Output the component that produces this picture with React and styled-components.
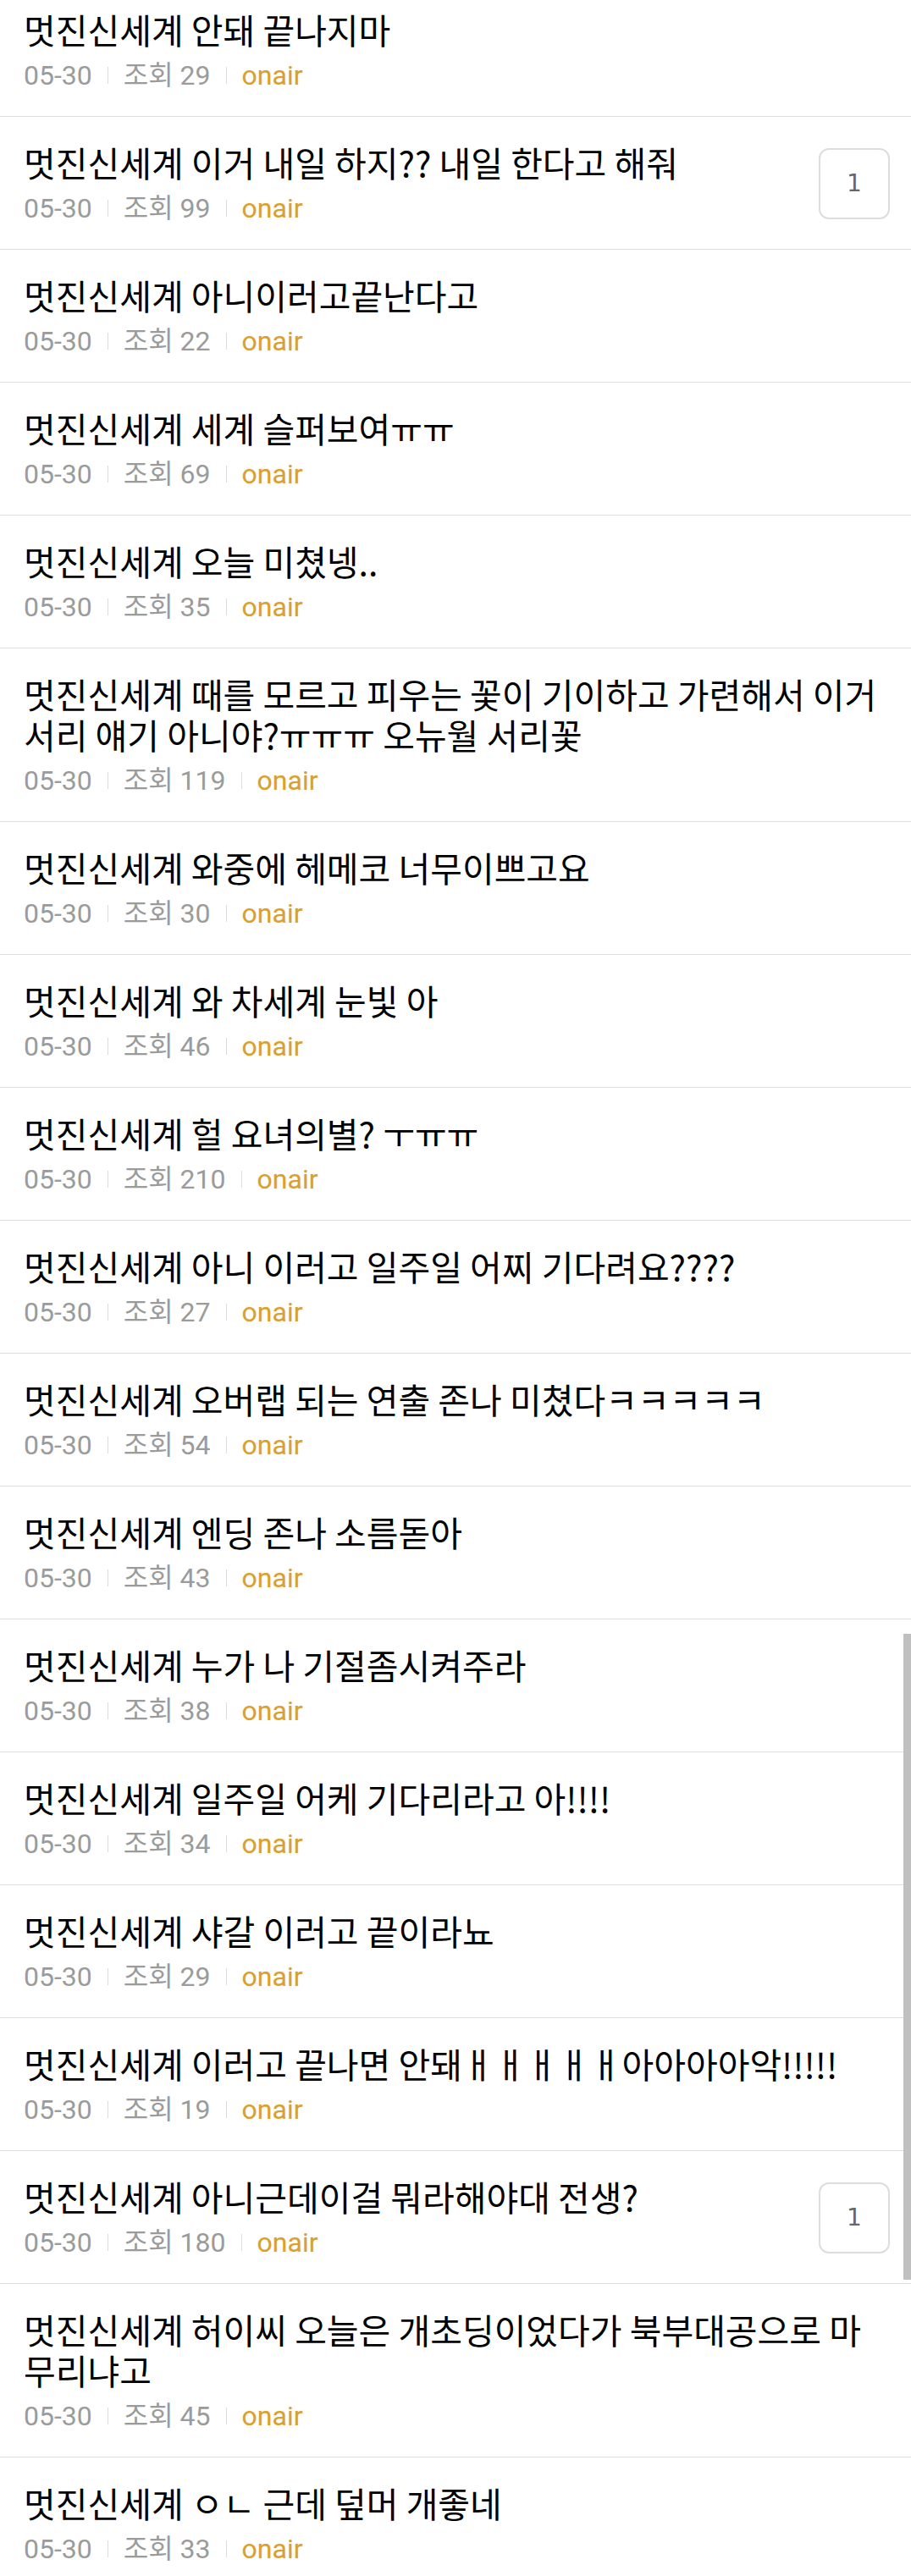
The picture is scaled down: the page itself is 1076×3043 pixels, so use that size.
import React from "react";
import styled, { createGlobalStyle } from "styled-components";

const GlobalStyle = createGlobalStyle`
  html, body {
    margin: 0;
    padding: 0;
    background: #fff;
  }
  body {
    font-family: "Noto Sans CJK KR", Roboto, sans-serif;
  }
`;

const Page = styled.div`
  position: relative;
  width: 1076px;
  height: 3043px;
  overflow: hidden;
  background: #fff;
`;

const List = styled.ul`
  list-style: none;
  margin: 0;
  padding: 0;
`;

const Item = styled.li`
  display: flex;
  align-items: center;
  padding: 29px 25px 28px 28px;
  border-bottom: 1px solid #dedede;

  &:first-child {
    padding-top: 10px;
  }
`;

const Body = styled.div`
  flex: 1;
  min-width: 0;
`;

const Title = styled.div`
  padding-right: 13px;
  font-family: "Noto Sans CJK KR", Roboto, sans-serif;
  font-size: 41px;
  line-height: 48px;
  color: #000;
`;

const Meta = styled.div`
  display: flex;
  align-items: center;
  margin-top: 11px;
  height: 40px;
  font-family: Roboto, "Noto Sans CJK KR", sans-serif;
  font-size: 32px;
  line-height: 40px;
  color: #9b9b9b;
`;

const Divider = styled.span`
  display: inline-block;
  width: 1px;
  height: 20px;
  margin: 0 18px;
  background: #dcdcdc;
`;

const Author = styled.span`
  color: #d9a030;
  text-shadow: 0 0 2px rgba(240, 200, 90, 0.35);
`;

const Badge = styled.div`
  flex: none;
  display: flex;
  align-items: center;
  justify-content: center;
  width: 80px;
  height: 80px;
  margin-left: 20px;
  border: 2px solid #dddddd;
  border-radius: 12px;
  font-family: "DejaVu Sans", sans-serif;
  font-size: 28px;
  color: #666;
`;

const Scrollbar = styled.div`
  position: absolute;
  top: 1930px;
  right: 0;
  width: 9px;
  height: 763px;
  background: #c0c0c0;
`;

const posts = [
  { title: "멋진신세계 안돼 끝나지마", views: 29 },
  { title: "멋진신세계 이거 내일 하지?? 내일 한다고 해줘", views: 99, comments: 1 },
  { title: "멋진신세계 아니이러고끝난다고", views: 22 },
  { title: "멋진신세계 세계 슬퍼보여ㅠㅠ", views: 69 },
  { title: "멋진신세계 오늘 미쳤넹..", views: 35 },
  {
    title:
      "멋진신세계 때를 모르고 피우는 꽃이 기이하고 가련해서 이거 서리 얘기 아니야?ㅠㅠㅠ 오뉴월 서리꽃",
    views: 119,
  },
  { title: "멋진신세계 와중에 헤메코 너무이쁘고요", views: 30 },
  { title: "멋진신세계 와 차세계 눈빛 아", views: 46 },
  { title: "멋진신세계 헐 요녀의별? ㅜㅠㅠ", views: 210 },
  { title: "멋진신세계 아니 이러고 일주일 어찌 기다려요????", views: 27 },
  { title: "멋진신세계 오버랩 되는 연출 존나 미쳤다ㅋㅋㅋㅋㅋ", views: 54 },
  { title: "멋진신세계 엔딩 존나 소름돋아", views: 43 },
  { title: "멋진신세계 누가 나 기절좀시켜주라", views: 38 },
  { title: "멋진신세계 일주일 어케 기다리라고 아!!!!", views: 34 },
  { title: "멋진신세계 샤갈 이러고 끝이라뇨", views: 29 },
  { title: "멋진신세계 이러고 끝나면 안돼ㅐㅐㅐㅐㅐ아아아아악!!!!!", views: 19 },
  { title: "멋진신세계 아니근데이걸 뭐라해야대 전생?", views: 180, comments: 1 },
  {
    title: "멋진신세계 허이씨 오늘은 개초딩이었다가 북부대공으로 마무리냐고",
    views: 45,
  },
  { title: "멋진신세계 ㅇㄴ 근데 덮머 개좋네", views: 33 },
];

function App() {
  return (
    <Page>
      <GlobalStyle />
      <List>
        {posts.map((post, i) => (
          <Item key={i}>
            <Body>
              <Title>{post.title}</Title>
              <Meta>
                <span>05-30</span>
                <Divider />
                <span>조회 {post.views}</span>
                <Divider />
                <Author>onair</Author>
              </Meta>
            </Body>
            {post.comments && <Badge>{post.comments}</Badge>}
          </Item>
        ))}
      </List>
      <Scrollbar />
    </Page>
  );
}

export default App;
